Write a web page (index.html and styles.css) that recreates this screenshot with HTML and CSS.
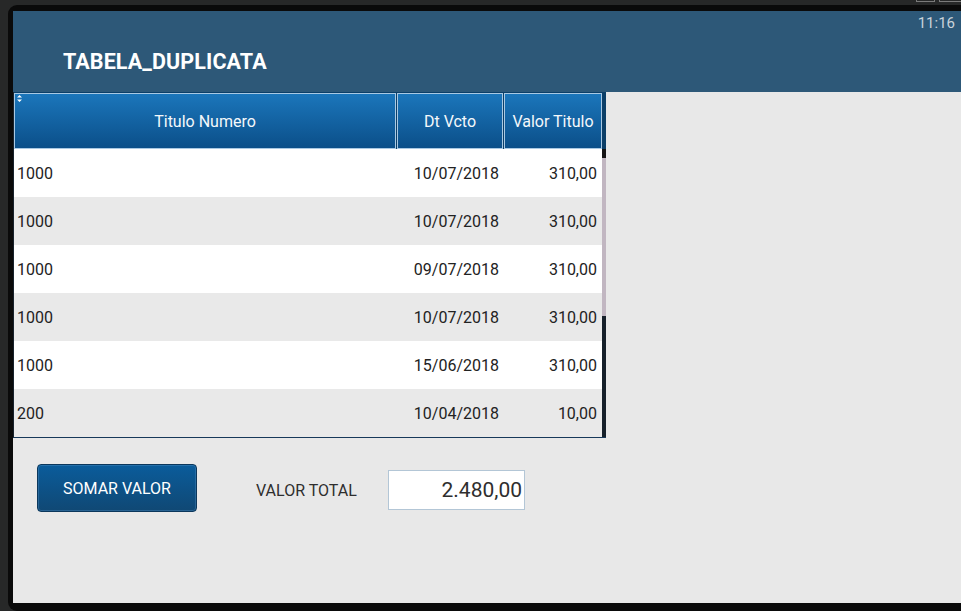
FILE: index.html
```html
<!DOCTYPE html>
<html lang="pt">
<head>
<meta charset="utf-8">
<title>TABELA_DUPLICATA</title>
<link rel="stylesheet" href="styles.css">
</head>
<body>
<div class="topstrip">
  <span class="winbtn winbtn-a"></span>
  <span class="winbtn winbtn-b"></span>
</div>
<div class="frame">
  <div class="app">
    <header class="appbar">
      <div class="clock">11:16</div>
      <h1 class="title">TABELA_DUPLICATA</h1>
    </header>
    <section class="table">
      <div class="thead">
        <div class="th th-num">
          <svg class="sort" width="5" height="7" viewBox="0 0 5 7"><path d="M2.5 0L5 2.6H0z M2.5 7L0 4.4H5z" fill="#fff"/></svg>
          Titulo Numero
        </div>
        <div class="th th-date">Dt Vcto</div>
        <div class="th th-val">Valor Titulo</div>
      </div>
      <div class="tbody">
        <div class="rows">
          <div class="row"><span class="c1">1000</span><span class="c2">10/07/2018</span><span class="c3">310,00</span></div>
          <div class="row alt"><span class="c1">1000</span><span class="c2">10/07/2018</span><span class="c3">310,00</span></div>
          <div class="row"><span class="c1">1000</span><span class="c2">09/07/2018</span><span class="c3">310,00</span></div>
          <div class="row alt"><span class="c1">1000</span><span class="c2">10/07/2018</span><span class="c3">310,00</span></div>
          <div class="row"><span class="c1">1000</span><span class="c2">15/06/2018</span><span class="c3">310,00</span></div>
          <div class="row alt"><span class="c1">200</span><span class="c2">10/04/2018</span><span class="c3">10,00</span></div>
        </div>
        <div class="scrollbar">
          <div class="sb-cap"></div>
          <div class="sb-thumb"></div>
          <div class="sb-track"></div>
        </div>
      </div>
    </section>
    <div class="footer">
      <button class="btn">SOMAR VALOR</button>
      <span class="total-label">VALOR TOTAL</span>
      <div class="total-box">2.480,00</div>
    </div>
  </div>
</div>
</body>
</html>
```
FILE: styles.css
```css
* { box-sizing: border-box; }
html, body { margin: 0; padding: 0; }
body {
  width: 961px;
  height: 611px;
  overflow: hidden;
  background: #272828;
  font-family: Roboto, "Liberation Sans", sans-serif;
}
.topstrip {
  height: 5px;
  display: flex;
  justify-content: flex-end;
  align-items: flex-start;
  gap: 4px;
  overflow: hidden;
}
.winbtn {
  display: block;
  height: 3px;
  margin-top: -1px;
  border: 1px solid #7a7a7a;
  border-top: none;
}
.winbtn-a { width: 19px; }
.winbtn-b { width: 22px; border-right: none; }
.frame {
  margin-left: 8px;
  height: 606px;
  background: #0a0a0a;
  border-radius: 9px 0 0 9px;
  padding: 6px 0 8px 5px;
}
.app {
  height: 592px;
  background: #e8e8e8;
  display: flex;
  flex-direction: column;
}
.appbar {
  height: 81px;
  background: #2d5878;
  display: flex;
  flex-direction: column;
  padding: 4px 6px 0 50px;
}
.clock {
  align-self: flex-end;
  color: #c9d3da;
  font-size: 15px;
  line-height: 17px;
}
.title {
  margin: 17px 0 0;
  color: #ffffff;
  font-size: 21.5px;
  font-weight: 700;
  line-height: 26px;
  letter-spacing: 0.1px;
}
.table {
  width: 593px;
  border-left: 1px solid #18222c;
  border-bottom: 1px solid #17395a;
}
.thead {
  height: 57px;
  display: flex;
  gap: 1px;
  padding: 1px 4px 0 0;
  background: #0c3f68;
}
.th {
  position: relative;
  height: 56px;
  display: flex;
  align-items: center;
  justify-content: center;
  border: 1px solid #a9c9e3;
  background: linear-gradient(#1b76bb, #0b4f89);
  color: #f4f8fb;
  font-size: 16px;
}
.th-num { width: 382px; }
.th-date { width: 106px; }
.th-val { width: 98px; }
.sort {
  position: absolute;
  left: 2px;
  top: 1px;
}
.tbody {
  display: flex;
}
.rows {
  width: 588px;
}
.row {
  height: 48px;
  display: grid;
  grid-template-columns: 383px 107px 98px;
  align-items: center;
  background: #ffffff;
  color: #222222;
  font-size: 16px;
}
.row.alt { background: #e9e9e9; }
.c1 { padding-left: 3px; }
.c2 { text-align: right; padding-right: 5px; }
.c3 { text-align: right; padding-right: 5px; }
.scrollbar {
  width: 4px;
  display: flex;
  flex-direction: column;
}
.sb-cap { height: 9px; background: #141414; }
.sb-thumb { height: 158px; background: #c1b6c1; }
.sb-track { flex: 1; background: #16202a; }
.footer {
  display: flex;
  align-items: flex-start;
  padding: 26px 0 0 24px;
}
.btn {
  width: 160px;
  height: 48px;
  margin: 0;
  padding: 0;
  border: 1px solid #0b375c;
  border-radius: 4px;
  background: linear-gradient(#0a5c9b, #104874);
  box-shadow: inset 0 0 0 1px rgba(90, 150, 200, 0.35);
  color: #ffffff;
  font-family: Roboto, "Liberation Sans", sans-serif;
  font-size: 16px;
}
.total-label {
  margin: 17px 0 0 59px;
  width: 132px;
  color: #2e2e2e;
  font-size: 16px;
  line-height: 20px;
}
.total-box {
  margin-top: 6px;
  width: 137px;
  height: 40px;
  border: 1px solid #b3c6d6;
  background: #ffffff;
  color: #2e2e2e;
  font-size: 21px;
  line-height: 38px;
  text-align: right;
  padding-right: 2px;
}
```
